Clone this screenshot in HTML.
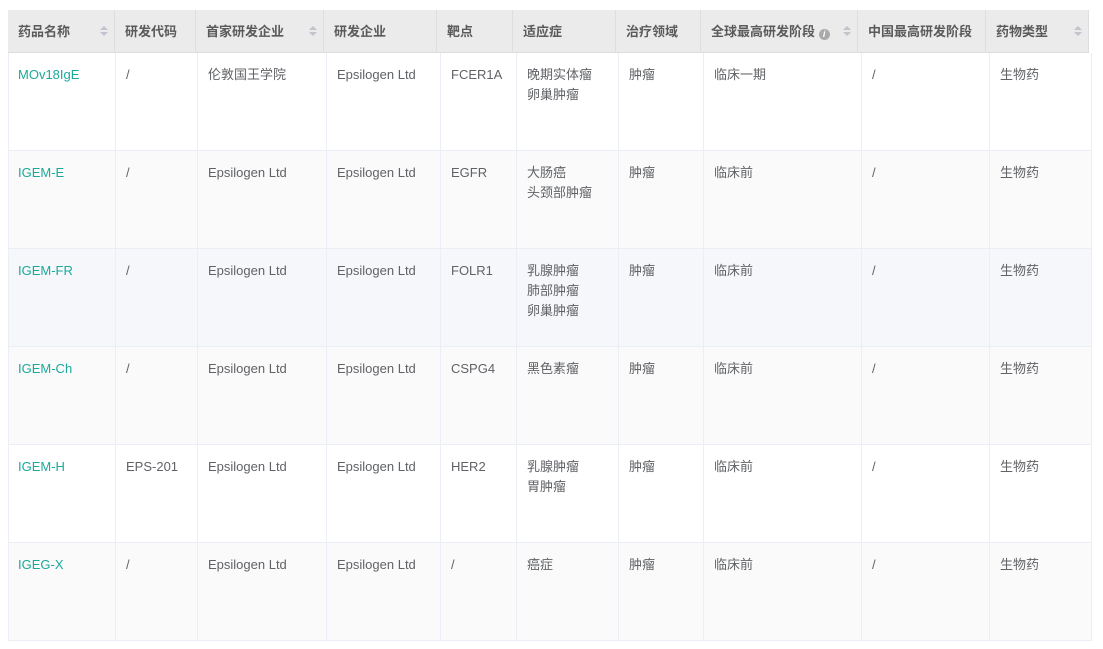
<!DOCTYPE html>
<html><head><meta charset="utf-8"><style>
body{margin:0;background:#fff;width:1103px;height:649px;overflow:hidden;font-family:"Liberation Sans","Noto Sans CJK SC",sans-serif;font-size:13px;color:#606266;position:relative}
.h{position:absolute;top:10px;height:43px;background:#ebebeb;border-bottom:1px solid #dcdcdc;box-sizing:border-box}
.hc{position:absolute;top:10px;height:43px;box-sizing:border-box;border-right:1px solid #dedede;padding:12px 0 0 10px;font-weight:bold;color:#5a5a5a;font-size:13px;line-height:20px}
.s{position:absolute;right:10px;top:16px;width:0;height:0}
.s:before{content:"";position:absolute;left:-4px;top:0;border:4px solid transparent;border-bottom:4px solid #c0c4cc;border-top:0}
.s:after{content:"";position:absolute;left:-4px;top:6px;border:4px solid transparent;border-top:4px solid #c0c4cc;border-bottom:0}
.r{position:absolute;left:8px;width:1084px;height:98px;border-bottom:1px solid #ebeef5;box-sizing:border-box}
.c{position:absolute;height:98px;box-sizing:border-box;border-right:1px solid #ebeef5;padding:12px 0 0 10px;line-height:20px}
.a{color:#1aa99a}
.i{display:inline-block;width:11px;height:11px;border-radius:50%;background:#aaa;color:#fff;font-size:9px;line-height:11px;text-align:center;font-style:italic;font-weight:bold;vertical-align:-1px}
</style></head><body>
<div class="h" style="left:8px;width:1081px"></div>
<div class="hc" style="left:8px;width:107px">药品名称<span class="s"></span></div>
<div class="hc" style="left:115px;width:81px">研发代码</div>
<div class="hc" style="left:196px;width:128px">首家研发企业<span class="s"></span></div>
<div class="hc" style="left:324px;width:113px">研发企业</div>
<div class="hc" style="left:437px;width:76px">靶点</div>
<div class="hc" style="left:513px;width:103px">适应症</div>
<div class="hc" style="left:616px;width:85px">治疗领域</div>
<div class="hc" style="left:701px;width:157px">全球最高研发阶段 <span class="i">i</span><span class="s"></span></div>
<div class="hc" style="left:858px;width:128px">中国最高研发阶段</div>
<div class="hc" style="left:986px;width:103px;border-right:1px solid #dedede">药物类型<span class="s"></span></div>
<div id="b"></div>
<script>
var rows=[
["MOv18IgE","/","伦敦国王学院","Epsilogen Ltd","FCER1A","晚期实体瘤<br>卵巢肿瘤","肿瘤","临床一期","/","生物药","#fff"],
["IGEM-E","/","Epsilogen Ltd","Epsilogen Ltd","EGFR","大肠癌<br>头颈部肿瘤","肿瘤","临床前","/","生物药","#fafafa"],
["IGEM-FR","/","Epsilogen Ltd","Epsilogen Ltd","FOLR1","乳腺肿瘤<br>肺部肿瘤<br>卵巢肿瘤","肿瘤","临床前","/","生物药","#f5f7fa"],
["IGEM-Ch","/","Epsilogen Ltd","Epsilogen Ltd","CSPG4","黑色素瘤","肿瘤","临床前","/","生物药","#fafafa"],
["IGEM-H","EPS-201","Epsilogen Ltd","Epsilogen Ltd","HER2","乳腺肿瘤<br>胃肿瘤","肿瘤","临床前","/","生物药","#fff"],
["IGEG-X","/","Epsilogen Ltd","Epsilogen Ltd","/","癌症","肿瘤","临床前","/","生物药","#fafafa"]];
var e=[8,116,198,327,441,517,619,704,862,990,1092],h="";
rows.forEach(function(r,k){var t=53+k*98;
h+='<div class="r" style="top:'+t+'px;background:'+r[10]+';border-left:1px solid #ebeef5"></div>';
for(var j=0;j<10;j++){h+='<div class="c'+(j==0?' a':'')+'" style="top:'+t+'px;left:'+e[j]+'px;width:'+(e[j+1]-e[j])+'px">'+r[j]+'</div>';}
});
document.getElementById('b').innerHTML=h;
</script>
</body></html>
